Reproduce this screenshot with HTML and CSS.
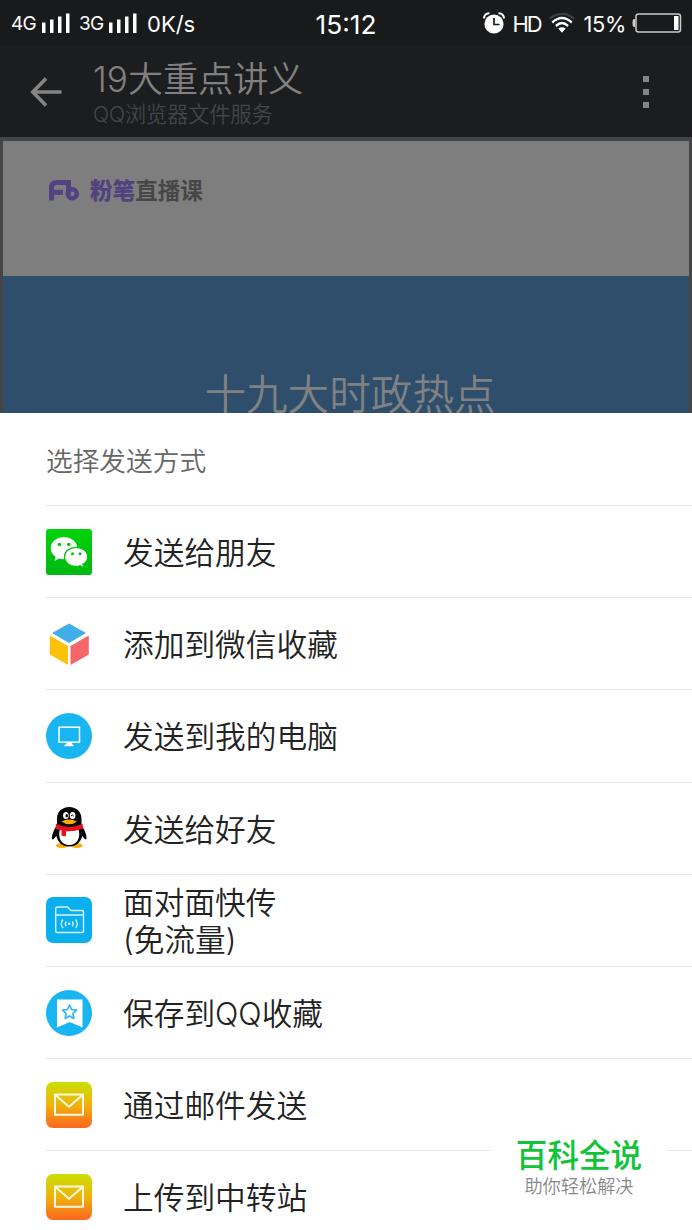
FILE: index.html
```
<!DOCTYPE html>
<html lang="zh-CN">
<head>
    <meta charset="UTF-8">
    <meta name="viewport" content="width=device-width, initial-scale=1.0">
    <title>19大重点讲义</title>

    <link rel="stylesheet" href="styles.css">
</head>
<body>
    <div class="tela">
        <div class="status">
            <div class="status-left">
                <span class="net">4G</span>
                <svg class="signal" width="28" height="20" viewBox="0 0 28 20" fill="#fff">
                    <path d="M0 9.5h3.5V20H0zM8 6.500h3.500V20H8zM16 3.500h3.500V20H16zM24 .5h3.500V20H24z"/>
                </svg>
                <span class="net net-2">3G</span>
                <svg class="signal" width="28" height="20" viewBox="0 0 28 20" fill="#fff">
                    <path d="M0 9.5h3.5V20H0zM8 6.500h3.500V20H8zM16 3.500h3.500V20H16zM24 .5h3.500V20H24z"/>
                </svg>
                <span class="speed">0K/s</span>
            </div>
            <div class="clock">15:12</div>
            <div class="status-right">
                <svg width="22" height="22" viewBox="0 0 22 22">
                    <circle cx="11" cy="12" r="9.6" fill="#fff"/>
                    <path d="M1 6.500C1 3 3.500 1 6.500 1.200M21 6.500C21 3 18.500 1 15.500 1.200" fill="none" stroke="#fff" stroke-width="2"/>
                    <path d="M11 6v6.500h5.500" fill="none" stroke="#191a1b" stroke-width="1.700"/>
                </svg>
                <span class="hd">HD</span>
                <svg class="wifi" width="26" height="20" viewBox="0 0 28 20" preserveAspectRatio="none" fill="none" stroke-width="2.400">
                    <path d="M1 5.500Q14-4 27 5.500" stroke="#3d3e40"/>
                    <path d="M3.500 9.500Q14 .5 24.500 9.500M7.500 13Q14 7 20.500 13" stroke="#fff"/>
                    <path d="M10 15.500Q14 13 18 15.500L14 19.800z" fill="#fff"/>
                </svg>
                <span class="percent">15%</span>
                <svg class="battery" width="50" height="20" viewBox="0 0 50 20">
                    <path d="M3 6H2Q.5 6 .5 10T2 14h1z" fill="#ccc"/>
                    <rect x="4" y="1" width="44.500" height="18" rx="2.500" fill="none" stroke="#c9c9c9" stroke-width="1.500"/>
                    <rect x="42" y="3" width="4.500" height="14" fill="#fff"/>
                </svg>
            </div>
        </div>

        <div class="topbar">
            <svg class="back" width="32" height="30" viewBox="0 0 32 30" fill="none" stroke="#858585" stroke-width="3.600">
                <path d="M16 1.500L2.800 15 16 28.500M3 15h28.500"/>
            </svg>
            <div class="titles">
                <h1>19大重点讲义</h1>
                <p>QQ浏览器文件服务</p>
            </div>
            <div class="more"><i></i><i></i><i></i></div>
        </div>

        <div class="doc">
            <div class="page">
                <svg class="fb" width="30" height="21" viewBox="0 0 30 21" fill="none" stroke="#50437f" stroke-width="5">
                    <path d="M2.500 20.500V8Q2.500 2.500 8 2.500h11.500v12"/>
                    <path d="M3 12.300h11"/>
                    <circle cx="23.200" cy="13.800" r="4.600" stroke-width="4.400"/>
                </svg>
                <span class="brand">粉笔<b>直播课</b></span>
            </div>
            <div class="capa">十九大时政热点</div>
        </div>

        <div class="sheet">
            <h2>选择发送方式</h2>
            <ul>
                <li>
                    <svg width="46" height="46" viewBox="0 0 46 46">
                        <defs>
                            <linearGradient id="verde" x2="0" y2="1"><stop stop-color="#00d30b"/><stop offset="1" stop-color="#00b812"/></linearGradient>
                        </defs>
                        <rect width="46" height="46" rx="3" fill="url(#verde)"/>
                        <path d="M18 8C10.500 8 4.700 13 4.700 19.200c0 3.500 1.800 6.500 4.900 8.600L8.500 32l4.700-2.500c1.500.5 3.200.7 4.800.7 7.400 0 13.300-4.800 13.300-11S25.400 8 18 8z" fill="#fff"/>
                        <path d="M30 18.300c-6.500 0-11.500 4.200-11.500 9.600S23.500 37.300 30 37.300c1.400 0 2.700-.2 3.900-.6l4 2.100-1-3.500c2.900-1.800 4.800-4.400 4.800-7.400 0-5.400-5.200-9.600-11.700-9.600z" fill="#fff" stroke="#00c50e" stroke-width="1.200"/>
                        <g fill="#00c50e"><circle cx="13.500" cy="15.500" r="1.800"/><circle cx="22.800" cy="15.500" r="1.800"/><circle cx="26.500" cy="24.800" r="1.500"/><circle cx="34" cy="24.800" r="1.500"/></g>
                    </svg>
                    <span>发送给朋友</span>
                </li>
                <li>
                    <svg width="46" height="46" viewBox="0 0 46 46">
                        <path d="M23 2.500L40 12 23 22 6 12z" fill="#40aee8"/>
                        <path d="M3.800 14.500L22 25v19L3.800 33.500z" fill="#ffc107"/>
                        <path d="M42.800 14.500L24.500 25v19l18.300-10.500z" fill="#f7666a"/>
                    </svg>
                    <span>添加到微信收藏</span>
                </li>
                <li>
                    <svg width="46" height="46" viewBox="0 0 46 46">
                        <circle cx="23" cy="23" r="23" fill="#19b5f1"/>
                        <rect x="13" y="14.200" width="20.500" height="15" fill="none" stroke="#fff" stroke-width="1.500"/>
                        <path d="M20.500 29h5.500v2l1.500 1v1.300h-9V32l2-1z" fill="#fff"/>
                    </svg>
                    <span>发送到我的电脑</span>
                </li>
                <li>
                    <svg width="46" height="46" viewBox="0 0 46 46">
                        <ellipse cx="16" cy="40.500" rx="6" ry="2.600" fill="#faab07"/>
                        <ellipse cx="30.500" cy="40.500" rx="6" ry="2.600" fill="#faab07"/>
                        <path d="M23.200 2C16 2 11 7 11 13.500v6.500C9 23.500 5.500 29 6 33.500c.3 2.500 2.500 0 4.300-2.700C11.500 37 16 41.500 23.200 41.500S35 37 36.200 30.800c1.800 2.700 4 5.200 4.300 2.700.5-4.500-3-10-5-13.500v-6.500C35.500 7 30.500 2 23.200 2z" fill="#060606"/>
                        <path d="M14 24q9 4 18.500 0c2.500 9-1.500 16-9.300 16S11.500 33 14 24z" fill="#fff"/>
                        <path d="M10 18.800q13 6.500 26.500 0l.7 4.700q-6 2.600-14 2.800-2 .1-3.200-.1v5l-4.500-.5v-5.200q-3-.5-6-2z" fill="#e60f1d"/>
                        <ellipse cx="19.900" cy="10.500" rx="2.800" ry="3.600" fill="#fff"/>
                        <ellipse cx="26.600" cy="10.500" rx="2.800" ry="3.600" fill="#fff"/>
                        <ellipse cx="20.800" cy="10.800" rx="1.200" ry="1.800"/>
                        <path d="M25 11q1.200-2 2.700 0" fill="none" stroke="#000"/>
                        <path d="M15.500 16.500q7.500-3.800 15.500 0-3.500 2.700-7.700 2.700t-7.800-2.700z" fill="#faab07"/>
                    </svg>
                    <span>发送给好友</span>
                </li>
                <li>
                    <svg width="46" height="46" viewBox="0 0 46 46" fill="none" stroke="#d9f3fe" stroke-width="1.400">
                        <rect width="46" height="46" rx="7" fill="#0aafee" stroke="none"/>
                        <path d="M9.700 34V11.500q0-1.500 1.500-1.500h10.300l3.500 3.500h11q1.500 0 1.500 1.500v19q0 1.500-1.500 1.500H11.200q-1.500 0-1.500-1.500zM9.700 18h27.800"/>
                        <path d="M17 22.500q-3.500 4.300 0 8.600M20.300 24.300q-2 2.500 0 5M29.500 22.500q3.500 4.300 0 8.600M26.200 24.300q2 2.500 0 5" stroke-width="1.300"/>
                        <circle cx="23.200" cy="26.800" r="1.200" fill="#fff" stroke="none"/>
                    </svg>
                    <span>面对面快传<br>(免流量)</span>
                </li>
                <li>
                    <svg width="46" height="46" viewBox="0 0 46 46">
                        <circle cx="23" cy="23" r="23" fill="#19b5f1"/>
                        <path d="M11 9.500h25.500v28L23.700 32 11 37.500z" fill="#fff"/>
                        <path d="M23.500 15l2.100 4.500 4.900.6-3.600 3.400.9 4.900-4.300-2.400-4.300 2.400.9-4.900-3.600-3.400 4.900-.6z" fill="none" stroke="#35b5ea" stroke-width="1.700" stroke-linejoin="round"/>
                    </svg>
                    <span>保存到QQ收藏</span>
                </li>
                <li>
                    <svg width="46" height="46" viewBox="0 0 46 46">
                        <defs>
                            <linearGradient id="correio" x2="0" y2="1"><stop stop-color="#c9e003"/><stop offset=".5" stop-color="#f0b20c"/><stop offset="1" stop-color="#fc6620"/></linearGradient>
                        </defs>
                        <rect width="46" height="46" rx="7" fill="url(#correio)"/>
                        <path d="M9 12.500h28v20.300H9zM10 13.500l13 11.300 13-11.300" fill="none" stroke="#fffbe0" stroke-width="2" stroke-linejoin="round"/>
                    </svg>
                    <span>通过邮件发送</span>
                </li>
                <li>
                    <svg width="46" height="46" viewBox="0 0 46 46">
                        <rect width="46" height="46" rx="7" fill="url(#correio)"/>
                        <path d="M9 12.500h28v20.300H9zM10 13.500l13 11.300 13-11.300" fill="none" stroke="#fffbe0" stroke-width="2" stroke-linejoin="round"/>
                    </svg>
                    <span>上传到中转站</span>
                </li>
            </ul>
        </div>

        <div class="marca">
            <strong>百科全说</strong>
            <small>助你轻松解决</small>
        </div>
    </div>
</body>
</html>
```
FILE: styles.css
```
* {
    box-sizing: border-box;
}

body {
    margin: 0;
    font-family: Inter, "Noto Sans CJK SC", sans-serif;
    font-weight: 350;
    background-color: #fff;
}

h1, h2, p, ul {
    margin: 0;
    padding: 0;
    font-weight: 350;
}

svg {
    display: block;
    flex-shrink: 0;
}

.tela {
    position: relative;
    width: 692px;
    height: 1230px;
    overflow: hidden;
}

.status {
    display: grid;
    grid-template-columns: 1fr auto 1fr;
    align-items: center;
    height: 46px;
    padding: 0 11px;
    background-color: #191a1b;
    color: #fff;
    font-size: 22px;
    font-weight: 400;
}

.status-left,
.status-right {
    display: flex;
    align-items: center;
    white-space: nowrap;
}

.status-right {
    justify-content: flex-end;
}

.net {
    width: 25px;
    font-size: 19px;
    letter-spacing: -0.8px;
}

.signal {
    margin-left: 6px;
}

.net-2 {
    margin-left: 9px;
    width: 24px;
}

.speed {
    margin-left: 10px;
    padding-top: 1px;
    font-size: 22px;
}

.clock {
    padding-top: 2px;
    font-size: 26.3px;
}

.hd {
    margin-left: 8px;
    padding-top: 1px;
    font-size: 22px;
    font-weight: 400;
    letter-spacing: -2.2px;
}

.wifi {
    margin-left: 9px;
}

.percent {
    margin-left: 8px;
    padding-top: 2px;
    font-size: 21.8px;
    letter-spacing: -0.3px;
}

.battery {
    margin-left: 6px;
    margin-right: -1px;
}

.topbar {
    display: flex;
    align-items: center;
    height: 91px;
    padding: 0 43px 0 30px;
    background-color: #1c1d1f;
}

.titles {
    flex: 1;
    margin-left: 31px;
    padding-top: 5px;
}

.titles h1 {
    font-size: 35.1px;
    line-height: 42px;
    color: #808080;
}

.titles p {
    font-size: 21.1px;
    line-height: 30px;
    color: #444547;
}

.more {
    display: flex;
    flex-direction: column;
    gap: 7px;
}

.more i {
    width: 6px;
    height: 6px;
    background-color: #858585;
}

.doc {
    height: 276px;
    padding: 4px 3px 0;
    background-color: #454545;
    overflow: hidden;
}

.page {
    display: flex;
    align-items: flex-start;
    height: 135px;
    padding: 39px 0 0 46px;
    background-color: #7e7e7e;
}

.brand {
    margin-left: 11px;
    font-size: 22.6px;
    line-height: 22px;
    font-weight: 900;
    color: #50437f;
}

.brand b {
    font-weight: 700;
    color: #474747;
}

.capa {
    height: 137px;
    padding-top: 89px;
    background-color: #2e4e6c;
    color: #7f8183;
    font-size: 41.6px;
    line-height: 60px;
    text-align: center;
    text-indent: 8px;
}

.sheet {
    height: 817px;
    padding-left: 46px;
    background-color: #fff;
}

.sheet h2 {
    height: 92px;
    font-size: 26.7px;
    line-height: 96px;
    color: #666;
}

.sheet ul {
    list-style: none;
}

.sheet li {
    display: flex;
    align-items: center;
    gap: 31px;
    height: 92.2px;
    border-top: 1px solid #e9e9e9;
    font-size: 30.7px;
    line-height: 37px;
    color: #222;
}

.sheet li span {
    padding-top: 2px;
}

/* selo por cima do canto da lista */
.marca {
    position: absolute;
    right: 26px;
    bottom: 20px;
    display: flex;
    flex-direction: column;
    align-items: center;
    width: 174px;
    height: 82px;
    padding-top: 9px;
    background-color: #fff;
}

.marca strong {
    font-size: 31.6px;
    line-height: 38px;
    font-weight: 500;
    color: #0fc437;
}

.marca small {
    font-size: 18.2px;
    line-height: 23px;
    color: #888;
}
```
